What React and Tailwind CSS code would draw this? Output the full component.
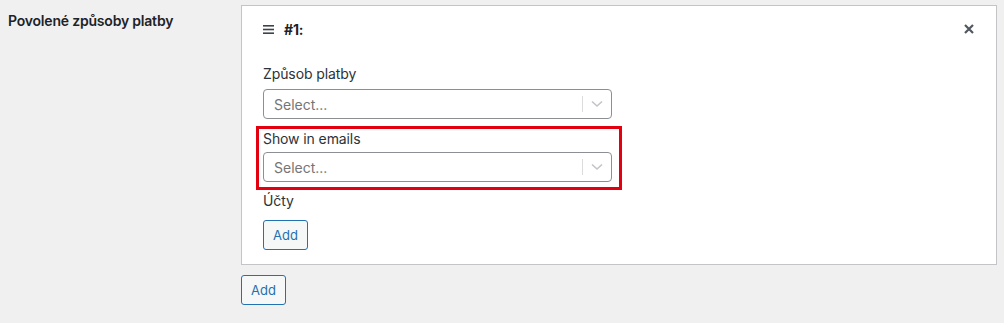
import React from "react";

function SelectBox() {
  return (
    <div className="flex h-[30px] w-[349px] items-center rounded-[4px] border border-[#8c8f94] bg-white">
      <div className="flex-1 pl-[10px] text-[14px] text-[#757575]">Select...</div>
      <div className="h-[16px] w-px bg-[#dcdcde]" />
      <div className="flex w-[28px] items-center justify-center">
        <svg width="12" height="8" viewBox="0 0 12 8">
          <path d="M1 1.5 L6 6 L11 1.5" fill="none" stroke="#c3c4c7" strokeWidth="1.6" />
        </svg>
      </div>
    </div>
  );
}

function AddButton() {
  return (
    <button className="h-[30px] rounded-[3px] border border-[#2271b1] bg-[#f6f7f7] px-[9px] text-[13px] leading-none text-[#2271b1]">
      Add
    </button>
  );
}

export default function App() {
  return (
    <div
      className="flex h-[323px] w-[1004px] bg-[#f0f0f1] pl-[8px] pt-[5px] text-[#1d2327]"
      style={{ fontFamily: "Inter, 'Noto Sans', sans-serif" }}
    >
      <div className="w-[233px] pt-[6px] text-[14px] font-semibold leading-5 tracking-[-0.2px]">
        Povolené způsoby platby
      </div>
      <div className="flex flex-col">
        <div className="w-[756px] border border-[#c3c4c7] bg-white pb-[14px] pl-[21px] pr-[20px] pt-[13px]">
          <div className="flex h-[20px] items-center justify-between">
            <div className="flex items-center gap-[10px]">
              <svg width="11" height="9" viewBox="0 0 11 9" fill="#3c434a">
                <rect x="0" y="0" width="11" height="1.6" />
                <rect x="0" y="3.7" width="11" height="1.6" />
                <rect x="0" y="7.4" width="11" height="1.6" />
              </svg>
              <span className="text-[14px] font-bold tracking-[-0.2px]">#1:</span>
            </div>
            <svg width="10" height="10" viewBox="0 0 10 10" className="mr-[2px]">
              <path d="M1 1 L9 9 M9 1 L1 9" stroke="#50575e" strokeWidth="2.2" />
            </svg>
          </div>
          <div className="mt-[25px] text-[14px] leading-5 tracking-[-0.1px] text-[#2c3338]">Způsob platby</div>
          <div className="mt-[5px]">
            <SelectBox />
          </div>
          <div className="ml-[-7px] mt-[7px] w-[366px] border-[3px] border-[#e3000f] pb-[5px] pl-[4px] pr-[7px] pt-0">
            <div className="text-[14px] leading-5 tracking-[-0.1px] text-[#2c3338]">Show in emails</div>
            <div className="mt-[3px]">
              <SelectBox />
            </div>
          </div>
          <div className="mt-[1px] text-[14px] leading-5 tracking-[-0.1px] text-[#2c3338]">Účty</div>
          <div className="mt-[9px]">
            <AddButton />
          </div>
        </div>
        <div className="mt-[10px]">
          <AddButton />
        </div>
      </div>
    </div>
  );
}
